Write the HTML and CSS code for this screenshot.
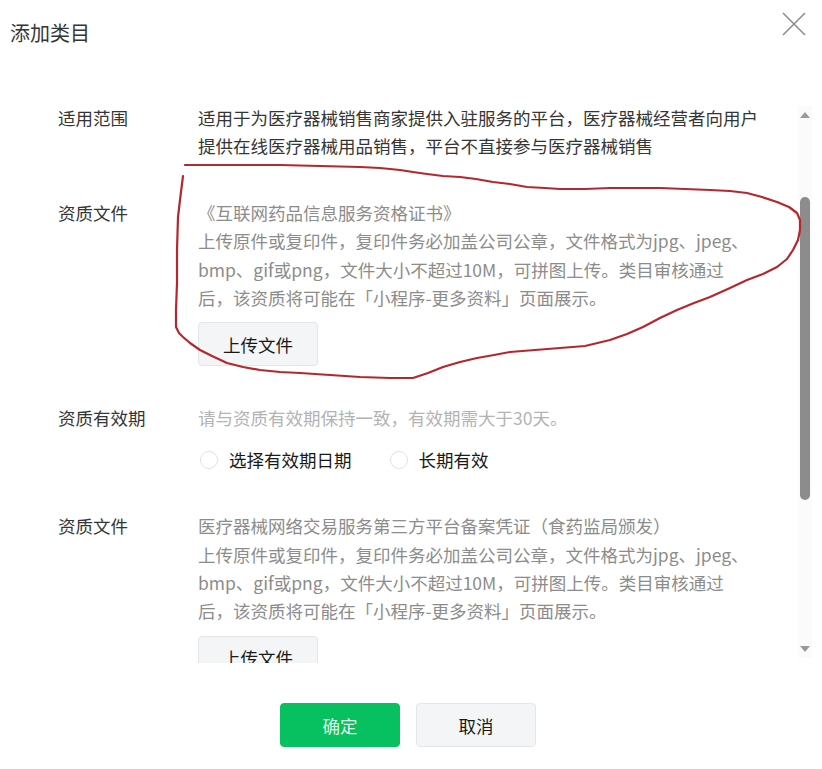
FILE: index.html
```html
<!DOCTYPE html>
<html lang="zh-CN">
<head>
<meta charset="utf-8">
<title>添加类目</title>
<link rel="stylesheet" href="styles.css">
</head>
<body>
<div class="dialog">
  <header class="dlg-head">
    <h2 class="dlg-title">添加类目</h2>
    <button class="dlg-close" aria-label="关闭">
      <svg width="24" height="24" viewBox="0 0 24 24"><path d="M1 1L23 23M23 1L1 23" stroke="#8a8a8a" stroke-width="1.5" fill="none"/></svg>
    </button>
  </header>

  <div class="dlg-body">
    <div class="scroll-view">
      <div class="row">
        <div class="label">适用范围</div>
        <div class="field">
          <p class="text">适用于为医疗器械销售商家提供入驻服务的平台，医疗器械经营者向用户提供在线医疗器械用品销售，平台不直接参与医疗器械销售</p>
        </div>
      </div>

      <div class="row">
        <div class="label">资质文件</div>
        <div class="field">
          <p class="desc">《互联网药品信息服务资格证书》<br>上传原件或复印件，复印件务必加盖公司公章，文件格式为jpg、jpeg、<br>bmp、gif或png，文件大小不超过10M，可拼图上传。类目审核通过<br>后，该资质将可能在「小程序-更多资料」页面展示。</p>
          <button class="btn upload">上传文件</button>
        </div>
      </div>

      <div class="row">
        <div class="label">资质有效期</div>
        <div class="field">
          <p class="hint">请与资质有效期保持一致，有效期需大于30天。</p>
          <div class="radios">
            <label class="radio"><span class="circle"></span><span>选择有效期日期</span></label>
            <label class="radio"><span class="circle"></span><span>长期有效</span></label>
          </div>
        </div>
      </div>

      <div class="row">
        <div class="label">资质文件</div>
        <div class="field">
          <p class="desc">医疗器械网络交易服务第三方平台备案凭证（食药监局颁发）<br>上传原件或复印件，复印件务必加盖公司公章，文件格式为jpg、jpeg、<br>bmp、gif或png，文件大小不超过10M，可拼图上传。类目审核通过<br>后，该资质将可能在「小程序-更多资料」页面展示。</p>
          <button class="btn upload">上传文件</button>
        </div>
      </div>
    </div>

    <div class="scrollbar">
      <span class="arrow up"></span>
      <div class="track"><div class="thumb"></div></div>
      <span class="arrow down"></span>
    </div>
  </div>

  <footer class="dlg-foot">
    <button class="btn primary">确定</button>
    <button class="btn">取消</button>
  </footer>

  <svg class="annotation" width="822" height="769" viewBox="0 0 822 769">
    <polyline fill="none" stroke="#b5272c" stroke-width="2.2" stroke-linejoin="round" stroke-linecap="round"
      points="183,176 180,200 178,217 177,250 177,283 176,310 176,327 179,333 183,337 190,343 200,350 212,356 227,363 243,367 260,370 280,372 300,373 330,375 360,377 390,378 413,378 428,373 443,367 460,362 477,358 494,355 510,352 535,350 560,348 585,346 610,340 627,334 643,327 660,318 677,310 694,303 710,297 730,288 747,280 763,274 777,267 787,259 793,250 798,240 800,230 800,220 797,213 789,207 777,202 762,197 747,193 730,191 710,190 685,189 660,188 635,188 610,188 585,189 560,189 545,188 527,187 510,184 493,182 476,179 460,177 443,176 427,174 413,172 400,170 380,168 360,167 320,166 280,165 240,165 210,165 185,165"/>
  </svg>
</div>
</body>
</html>
```

FILE: styles.css
```css
* {
  box-sizing: border-box;
}

html, body {
  margin: 0;
  padding: 0;
  background: #fff;
}

body {
  font-family: "Noto Sans CJK SC", "Noto Sans", sans-serif;
  color: #353535;
}

.dialog {
  position: relative;
  width: 822px;
  height: 769px;
  overflow: hidden;
  display: flex;
  flex-direction: column;
  background: #fff;
}

.dlg-head {
  height: 100px;
  flex: none;
  display: flex;
  justify-content: space-between;
  align-items: flex-start;
}

.dlg-title {
  margin: 0;
  padding: 19px 0 0 10px;
  font-size: 20px;
  line-height: 28px;
  font-weight: 400;
  color: #353535;
}

.dlg-close {
  margin: 12px 16px 0 0;
  padding: 0;
  border: 0;
  background: none;
  width: 24px;
  height: 24px;
  display: block;
}

.dlg-close svg {
  display: block;
}

.dlg-body {
  height: 563px;
  flex: none;
  display: flex;
}

.scroll-view {
  flex: 1;
  overflow: hidden;
  padding: 4px 0 0 58px;
}

.row {
  display: flex;
  margin-bottom: 38px;
  font-size: 17.5px;
  line-height: 28.4px;
}

.label {
  width: 140px;
  flex: none;
  color: #353535;
}

.field {
  width: 568px;
  flex: none;
}

.field p {
  margin: 0;
}

.text {
  color: #353535;
}

.desc {
  color: #8c8c8c;
}

.hint {
  color: #b3b3b3;
}

.btn {
  font-family: inherit;
  font-size: 17.5px;
  width: 120px;
  height: 44px;
  border-radius: 4px;
  border: 1px solid #e4e5e7;
  background: #f4f5f7;
  color: #191919;
  padding: 0;
  display: block;
}

.upload {
  margin-top: 10px;
}

.radios {
  display: flex;
  gap: 38px;
  margin-top: 13px;
  padding-left: 2px;
}

.radio {
  display: flex;
  align-items: center;
  gap: 11px;
  color: #191919;
}

.circle {
  width: 18px;
  height: 18px;
  border-radius: 50%;
  border: 1px solid #e2e2e2;
}

.scrollbar {
  width: 14px;
  flex: none;
  margin: 6px 10px 5px 0;
  display: flex;
  flex-direction: column;
  align-items: center;
  background: #fbfbfb;
}

.arrow {
  height: 18px;
  width: 14px;
  flex: none;
  display: flex;
  align-items: center;
  justify-content: center;
}

.arrow::before {
  content: "";
  width: 0;
  height: 0;
  border-left: 5px solid transparent;
  border-right: 5px solid transparent;
}

.arrow.up::before {
  border-bottom: 6px solid #9a9a9a;
}

.arrow.down::before {
  border-top: 6px solid #9a9a9a;
}

.track {
  flex: 1;
  width: 100%;
  display: flex;
  justify-content: center;
}

.thumb {
  width: 10px;
  height: 303px;
  margin-top: 73px;
  border-radius: 5px;
  background: #8c8c8c;
}

.dlg-foot {
  flex: none;
  display: flex;
  justify-content: center;
  gap: 16px;
  padding: 40px 6px 0 0;
}

.btn.primary {
  background: #07c160;
  border-color: #07c160;
  color: rgba(255, 255, 255, 0.88);
}

.annotation {
  position: absolute;
  left: 0;
  top: 0;
  pointer-events: none;
}
```
